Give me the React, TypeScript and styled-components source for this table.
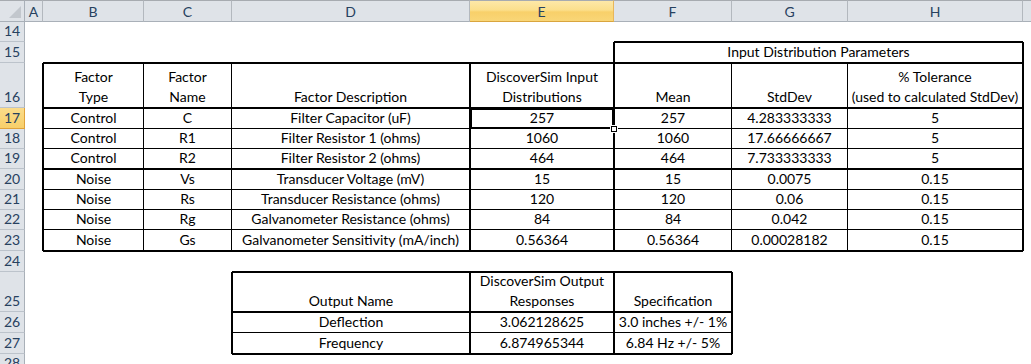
import React from 'react';
import styled, { createGlobalStyle } from 'styled-components';

const GlobalStyle = createGlobalStyle`
  html, body { margin: 0; padding: 0; background: #ffffff; overflow: hidden; }
  body { font-family: Lato, "Liberation Sans", sans-serif; }
`;

const COLS = [25, 18, 101, 88, 238, 144, 118, 116, 175, 64];
const LETTERS = ['A', 'B', 'C', 'D', 'E', 'F', 'G', 'H', ''];
const FIRST_ROW = 14;
const ROW_H = [20, 21, 45, 21, 20, 20, 21, 20, 20, 21, 21, 40, 21, 21, 20];
const SELECTED_COL = 4;
const SELECTED_ROW = 17;

const Sheet = styled.div`
  display: grid;
  grid-template-columns: ${COLS.map((c) => `${c}px`).join(' ')};
  grid-template-rows: 22px ${ROW_H.map((h) => `${h}px`).join(' ')};
  width: 1031px;
  height: 364px;
  overflow: hidden;
  background: #ffffff;
  font-size: 14px;
`;

const SelectAll = styled.div`
  position: relative;
  box-sizing: border-box;
  background: #dfe3e8;
  border-top: 1px solid #a7abb0;
  border-right: 1px solid #a9b0b8;
  border-bottom: 1px solid #a9b0b8;
  &::after {
    content: '';
    position: absolute;
    right: 3px;
    bottom: 3px;
    width: 0;
    height: 0;
    border-left: 12px solid transparent;
    border-bottom: 12px solid #c2c7cd;
  }
`;

const ColHead = styled.div<{ $sel?: boolean }>`
  box-sizing: border-box;
  display: flex;
  align-items: center;
  justify-content: center;
  color: #27415f;
  font-size: 14px;
  border-top: 1px solid #a7abb0;
  border-right: 1px solid ${(p) => (p.$sel ? '#e8b65a' : '#b3b8be')};
  border-bottom: 1px solid ${(p) => (p.$sel ? '#d9a53e' : '#a9b0b8')};
  background: ${(p) =>
    p.$sel
      ? 'linear-gradient(#fde8a8 0%, #fbdf8c 45%, #f8d06a 55%, #f9d677 100%)'
      : '#dfe3e8'};
`;

const RowHead = styled.div<{ $sel?: boolean }>`
  box-sizing: border-box;
  display: flex;
  align-items: flex-end;
  justify-content: center;
  line-height: 20px;
  color: #27415f;
  font-size: 14px;
  background: ${(p) => (p.$sel ? 'linear-gradient(#fbdc8a, #f8cf6a)' : '#dfe3e8')};
  border-right: 1px solid ${(p) => (p.$sel ? '#e0a23a' : '#a9b0b8')};
  border-bottom: 1px solid ${(p) => (p.$sel ? '#e0a23a' : '#bcc3cb')};
`;

const Cell = styled.div<{ $t: number; $r: number; $b: number; $l: number; $span?: number }>`
  position: relative;
  box-sizing: border-box;
  display: flex;
  flex-direction: column;
  justify-content: flex-end;
  align-items: center;
  white-space: nowrap;
  line-height: 20px;
  color: #000000;
  border-style: solid;
  border-color: #000000;
  border-width: ${(p) => `${p.$t}px ${p.$r}px ${p.$b}px ${p.$l}px`};
  ${(p) => (p.$span ? `grid-column: span ${p.$span};` : '')}
`;

const Line = styled.span`
  display: block;
`;

const Selection = styled.div`
  position: absolute;
  left: -1px;
  right: -1px;
  top: -1px;
  bottom: -1px;
  border: 2px solid #000000;
  pointer-events: none;
`;

const FillHandle = styled.div`
  position: absolute;
  right: -4px;
  bottom: -4px;
  width: 4px;
  height: 4px;
  background: #ffffff;
  border: 1px solid #000000;
  box-shadow: 0 0 0 1px #ffffff;
  z-index: 2;
`;

// horizontal edge above row r at column c (0 = none, 1 = thin, 2 = medium)
function hEdge(r: number, c: number): number {
  const inT1 = c >= 1 && c <= 7;
  const inT2 = c >= 3 && c <= 5;
  if (r === 15) return c >= 5 && c <= 7 ? 2 : 0;
  if ([16, 17, 20, 24].includes(r)) return inT1 ? 2 : 0;
  if ([18, 19, 21, 22, 23].includes(r)) return inT1 ? 1 : 0;
  if ([25, 26, 28].includes(r)) return inT2 ? 2 : 0;
  if (r === 27) return inT2 ? 1 : 0;
  return 0;
}

// vertical edge left of column c at row r
function vEdge(r: number, c: number): number {
  if (r === 15) return c === 5 || c === 8 ? 2 : 0;
  if (r >= 16 && r <= 23) {
    const map: Record<number, number> = { 1: 2, 2: 1, 3: 1, 4: 2, 5: 2, 6: 1, 7: 1, 8: 2 };
    return map[c] || 0;
  }
  if (r >= 25 && r <= 27) return c >= 3 && c <= 6 ? 2 : 0;
  return 0;
}

const DATA: Record<string, string[]> = {
  '15-5': ['Input Distribution Parameters'],
  '16-1': ['Factor', 'Type'],
  '16-2': ['Factor', 'Name'],
  '16-3': ['Factor Description'],
  '16-4': ['DiscoverSim Input', 'Distributions'],
  '16-5': ['Mean'],
  '16-6': ['StdDev'],
  '16-7': ['% Tolerance', '(used to calculated StdDev)'],
  '25-3': ['Output Name'],
  '25-4': ['DiscoverSim Output', 'Responses'],
  '25-5': ['Specification'],
};

const TABLE_ROWS: [number, string[]][] = [
  [17, ['Control', 'C', 'Filter Capacitor (uF)', '257', '257', '4.283333333', '5']],
  [18, ['Control', 'R1', 'Filter Resistor 1 (ohms)', '1060', '1060', '17.66666667', '5']],
  [19, ['Control', 'R2', 'Filter Resistor 2 (ohms)', '464', '464', '7.733333333', '5']],
  [20, ['Noise', 'Vs', 'Transducer Voltage (mV)', '15', '15', '0.0075', '0.15']],
  [21, ['Noise', 'Rs', 'Transducer Resistance (ohms)', '120', '120', '0.06', '0.15']],
  [22, ['Noise', 'Rg', 'Galvanometer Resistance (ohms)', '84', '84', '0.042', '0.15']],
  [23, ['Noise', 'Gs', 'Galvanometer Sensitivity (mA/inch)', '0.56364', '0.56364', '0.00028182', '0.15']],
];
TABLE_ROWS.forEach(([r, vals]) => vals.forEach((v, i) => (DATA[`${r}-${i + 1}`] = [v])));
DATA['26-3'] = ['Deflection'];
DATA['26-4'] = ['3.062128625'];
DATA['26-5'] = ['3.0 inches +/- 1%'];
DATA['27-3'] = ['Frequency'];
DATA['27-4'] = ['6.874965344'];
DATA['27-5'] = ['6.84 Hz +/- 5%'];

export default function App() {
  const cells: React.ReactNode[] = [];
  ROW_H.forEach((_, i) => {
    const r = FIRST_ROW + i;
    cells.push(
      <RowHead key={`rh-${r}`} $sel={r === SELECTED_ROW}>
        {r}
      </RowHead>
    );
    for (let c = 0; c < LETTERS.length; c++) {
      const merged = r === 15 && c === 5;
      const span = merged ? 3 : undefined;
      const lastCol = merged ? c + 2 : c;
      const t = hEdge(r, c) === 2 ? 1 : 0;
      const b = hEdge(r + 1, c) >= 1 ? 1 : 0;
      const l = vEdge(r, c) === 2 ? 1 : 0;
      const rr = vEdge(r, lastCol + 1) >= 1 ? 1 : 0;
      const lines = DATA[`${r}-${c}`];
      const selected = r === SELECTED_ROW && c === SELECTED_COL;
      cells.push(
        <Cell key={`${r}-${c}`} $t={t} $r={rr} $b={b} $l={l} $span={span}>
          {lines && lines.map((ln, k) => <Line key={k}>{ln}</Line>)}
          {selected && (
            <>
              <Selection />
              <FillHandle />
            </>
          )}
        </Cell>
      );
      if (merged) c += 2;
    }
  });

  return (
    <>
      <GlobalStyle />
      <Sheet>
        <SelectAll />
        {LETTERS.map((L, i) => (
          <ColHead key={`col-${i}`} $sel={i === SELECTED_COL}>
            {L}
          </ColHead>
        ))}
        {cells}
      </Sheet>
    </>
  );
}
